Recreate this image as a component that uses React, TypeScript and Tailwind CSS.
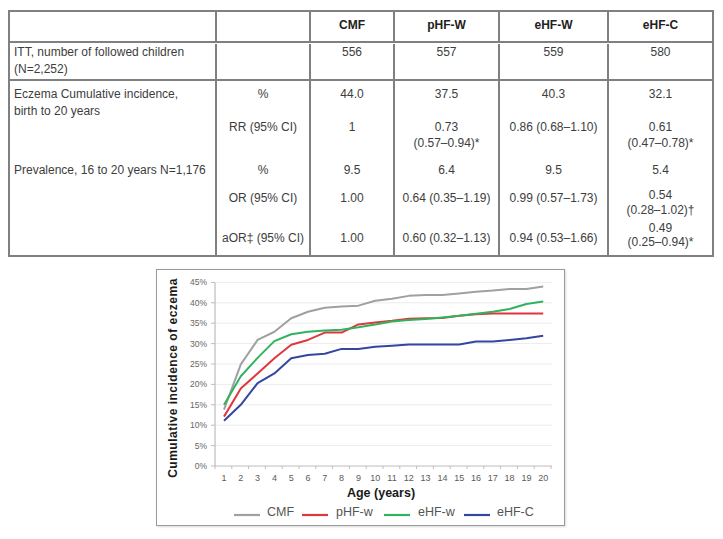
import React from 'react'

const cols = 'grid grid-cols-[205px_94px_84px_105px_109px_105px]'
const cell = 'border-l-2 border-[#808080] text-center'

const ages = Array.from({ length: 20 }, (_, i) => i + 1)

const series = [
  {
    name: 'CMF',
    color: '#a0a0a0',
    data: [13.8, 24.9, 30.9, 32.9, 36.2, 37.8, 38.8, 39.1, 39.3, 40.5, 41.0, 41.7, 41.9, 41.9, 42.3, 42.7, 43.0, 43.4, 43.4, 44.0],
  },
  {
    name: 'pHF-w',
    color: '#e0373d',
    data: [12.1, 19.0, 22.7, 26.4, 29.7, 30.9, 32.7, 32.7, 34.7, 35.2, 35.6, 36.1, 36.2, 36.3, 36.8, 37.2, 37.4, 37.4, 37.4, 37.4],
  },
  {
    name: 'eHF-w',
    color: '#2fb35f',
    data: [15.0, 22.0, 26.5, 30.6, 32.3, 32.9, 33.2, 33.4, 34.0, 34.7, 35.4, 35.8, 36.0, 36.4, 36.8, 37.3, 37.8, 38.5, 39.7, 40.3],
  },
  {
    name: 'eHF-C',
    color: '#3346a2',
    data: [11.1, 15.0, 20.3, 22.7, 26.4, 27.2, 27.5, 28.7, 28.7, 29.2, 29.5, 29.8, 29.8, 29.8, 29.8, 30.5, 30.5, 30.9, 31.3, 31.9],
  },
]

const yOf = (p: number) => 196 - p * 4.08
const xOf = (a: number) => 67 + (a - 1) * 16.8

function Chart() {
  const axisX = 58
  const right = 395
  return (
    <svg width={407} height={255} className="block" style={{ fontFamily: '"Liberation Sans", Arial, sans-serif' }}>
      {/* gridlines + y labels */}
      {[0, 5, 10, 15, 20, 25, 30, 35, 40, 45].map(p => (
        <g key={p}>
          {p > 0 && <line x1={axisX} x2={right} y1={yOf(p)} y2={yOf(p)} stroke="#ececec" strokeWidth={1} />}
          <line x1={axisX - 4} x2={axisX} y1={yOf(p)} y2={yOf(p)} stroke="#bdbdbd" strokeWidth={1} />
          <text x={50} y={yOf(p) + 3} fontSize={8.5} textAnchor="end" fill="#666">
            {p}%
          </text>
        </g>
      ))}
      {/* axes */}
      <line x1={axisX} x2={axisX} y1={yOf(45)} y2={yOf(0)} stroke="#bdbdbd" strokeWidth={1.2} />
      <line x1={axisX} x2={right} y1={yOf(0)} y2={yOf(0)} stroke="#bdbdbd" strokeWidth={1.2} />
      {Array.from({ length: 21 }, (_, i) => (
        <line key={i} x1={axisX + i * 16.8} x2={axisX + i * 16.8} y1={yOf(0)} y2={yOf(0) + 3} stroke="#bdbdbd" strokeWidth={1} />
      ))}
      {ages.map(a => (
        <text key={a} x={xOf(a)} y={211} fontSize={9} textAnchor="middle" fill="#5a5a5a">
          {a}
        </text>
      ))}
      {/* series */}
      {series.map(s => (
        <polyline
          key={s.name}
          points={s.data.map((v, i) => `${xOf(i + 1)},${yOf(v)}`).join(' ')}
          fill="none"
          stroke={s.color}
          strokeWidth={2}
          strokeLinejoin="round"
        />
      ))}
      {/* axis titles */}
      <text x={224} y={227} fontSize={12.5} fontWeight={700} textAnchor="middle" fill="#1a1a1a">
        Age (years)
      </text>
      <text
        transform="translate(20 108) rotate(-90)"
        fontSize={12}
        fontWeight={700}
        textAnchor="middle"
        letterSpacing={0.5}
        fill="#1a1a1a"
      >
        Cumulative incidence of eczema
      </text>
      {/* legend */}
      {[
        { x: 77, tx: 110 },
        { x: 145, tx: 179 },
        { x: 227, tx: 261 },
        { x: 307, tx: 340 },
      ].map((l, i) => (
        <g key={i}>
          <line x1={l.x} x2={l.x + 26} y1={245} y2={245} stroke={series[i].color} strokeWidth={2.2} />
          <text x={l.tx} y={246} fontSize={12.5} fill="#555">
            {series[i].name}
          </text>
        </g>
      ))}
    </svg>
  )
}

export default function App() {
  return (
    <div
      className="w-[723px] h-[539px] bg-white overflow-hidden pt-[10px] text-[12px] text-[#3d3d3d]"
      style={{ fontFamily: '"Liberation Sans", Arial, sans-serif' }}
    >
      <div className="ml-[8px] w-[706px] border-2 border-[#808080]">
        {/* header */}
        <div className={`${cols} h-[31px] border-b-2 border-[#808080] font-bold text-[#222] leading-[16px]`}>
          <div />
          <div className={cell} />
          <div className={`${cell} pt-[5px]`}>CMF</div>
          <div className={`${cell} pt-[5px]`}>pHF-W</div>
          <div className={`${cell} pt-[5px]`}>eHF-W</div>
          <div className={`${cell} pt-[5px]`}>eHF-C</div>
        </div>

        {/* ITT */}
        <div className={`${cols} h-[38px] border-b-2 border-[#808080] leading-[17px] pt-[1px]`}>
          <div className="pl-[4px]">
            ITT, number of followed children
            <br />
            (N=2,252)
          </div>
          <div className={cell} />
          <div className={cell}>556</div>
          <div className={cell}>557</div>
          <div className={cell}>559</div>
          <div className={cell}>580</div>
        </div>

        {/* Eczema % */}
        <div className={`${cols} h-[37px] leading-[17px]`}>
          <div className="pl-[4px] pt-[5px]">
            Eczema Cumulative incidence,
            <br />
            birth to 20 years
          </div>
          <div className={`${cell} pt-[5px]`}>%</div>
          <div className={`${cell} pt-[5px]`}>44.0</div>
          <div className={`${cell} pt-[5px]`}>37.5</div>
          <div className={`${cell} pt-[5px]`}>40.3</div>
          <div className={`${cell} pt-[5px]`}>32.1</div>
        </div>

        {/* RR */}
        <div className={`${cols} h-[34px] leading-[16px]`}>
          <div />
          <div className={`${cell} pt-[1px]`}>RR (95% CI)</div>
          <div className={`${cell} pt-[1px]`}>1</div>
          <div className={`${cell} pt-[1px]`}>
            0.73
            <br />
            (0.57–0.94)*
          </div>
          <div className={`${cell} pt-[1px]`}>0.86 (0.68–1.10)</div>
          <div className={`${cell} pt-[1px]`}>
            0.61
            <br />
            (0.47–0.78)*
          </div>
        </div>

        {/* Prevalence % */}
        <div className={`${cols} h-[32px] leading-[16px]`}>
          <div className="pl-[4px] pt-[10px]">Prevalence, 16 to 20 years N=1,176</div>
          <div className={`${cell} pt-[10px]`}>%</div>
          <div className={`${cell} pt-[10px]`}>9.5</div>
          <div className={`${cell} pt-[10px]`}>6.4</div>
          <div className={`${cell} pt-[10px]`}>9.5</div>
          <div className={`${cell} pt-[10px]`}>5.4</div>
        </div>

        {/* OR */}
        <div className={`${cols} h-[34px] leading-[15px]`}>
          <div />
          <div className={`${cell} pt-[7px]`}>OR (95% CI)</div>
          <div className={`${cell} pt-[7px]`}>1.00</div>
          <div className={`${cell} pt-[7px]`}>0.64 (0.35–1.19)</div>
          <div className={`${cell} pt-[7px]`}>0.99 (0.57–1.73)</div>
          <div className={`${cell} pt-[4px]`}>
            0.54
            <br />
            (0.28–1.02)†
          </div>
        </div>

        {/* aOR */}
        <div className={`${cols} h-[37px] leading-[15px]`}>
          <div />
          <div className={`${cell} pt-[13px]`}>aOR‡ (95% CI)</div>
          <div className={`${cell} pt-[13px]`}>1.00</div>
          <div className={`${cell} pt-[13px]`}>0.60 (0.32–1.13)</div>
          <div className={`${cell} pt-[13px]`}>0.94 (0.53–1.66)</div>
          <div className={`${cell} pt-[3px] leading-[14px]`}>
            0.49
            <br />
            (0.25–0.94)*
          </div>
        </div>
      </div>

      <div className="mt-[12px] ml-[156px] w-[409px] h-[257px] border border-[#9a9a9a] shadow-[1px_1px_2px_rgba(0,0,0,0.15)]">
        <Chart />
      </div>
    </div>
  )
}
